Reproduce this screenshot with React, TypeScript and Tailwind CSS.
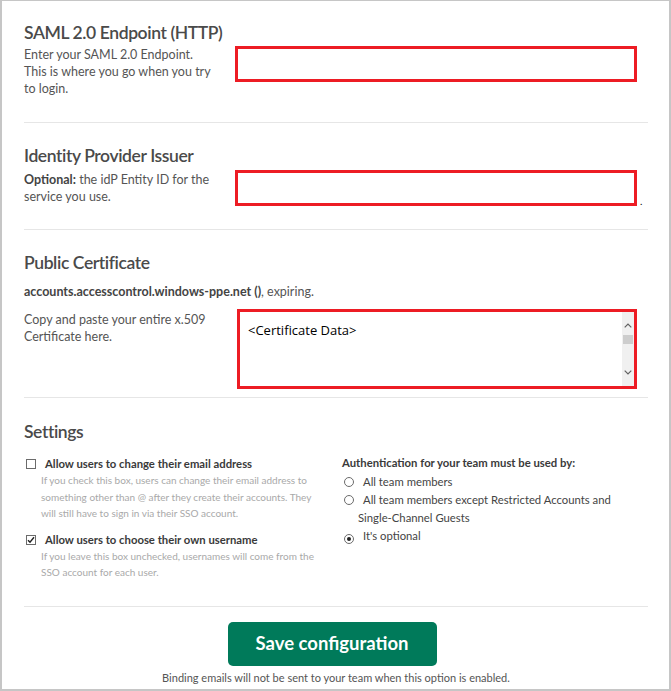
import React from 'react'

function Radio({ checked }: { checked?: boolean }) {
  return (
    <span className="inline-flex items-center justify-center w-[10px] h-[10px] rounded-full border border-[#6b6b6b] bg-white mr-[9px] align-[-1px] [text-indent:0]">
      {checked && <span className="w-[4px] h-[4px] rounded-full bg-[#222]" />}
    </span>
  )
}

function Checkbox({ checked }: { checked?: boolean }) {
  return (
    <span className="flex items-center justify-center w-[10px] h-[10px] ml-[2px] border border-[#6b6b6b] bg-white shrink-0">
      {checked && (
        <svg width="8" height="8" viewBox="0 0 8 8">
          <path d="M1 4.2 L3 6.3 L7 1.3" fill="none" stroke="#222" strokeWidth="1.4" />
        </svg>
      )}
    </span>
  )
}

function Chevron({ up }: { up?: boolean }) {
  return (
    <svg width="8" height="5" viewBox="0 0 8 5">
      <path d={up ? 'M0.7 4.3 L4 1 L7.3 4.3' : 'M0.7 0.7 L4 4 L7.3 0.7'} fill="none" stroke="#606060" strokeWidth="1.2" />
    </svg>
  )
}

export default function App() {
  return (
    <div className="w-[671px] h-[691px] bg-white border-[#c6c6c6] border-l-2 border-r-2 border-t border-b-2 [font-family:Lato,sans-serif] text-[#555]">
      <div className="pl-[22px] pr-[21px]">
        {/* SAML endpoint */}
        <section className="pt-[21px] pb-[25px] border-b border-[#e6e6e6]">
          <h2 className="text-[17.5px] leading-[22px] tracking-[-0.4px] font-semibold text-[#4a4a4a]">SAML 2.0 Endpoint (HTTP)</h2>
          <div className="flex mt-[2px]">
            <p className="w-[211px] text-[12.5px] leading-[17px]">
              Enter your SAML 2.0 Endpoint.<br />
              This is where you go when you try<br />
              to login.
            </p>
            <div className="w-[402px] h-[36px] border-[3px] border-[#ed1c24]" />
          </div>
        </section>

        {/* Issuer */}
        <section className="pt-[22px] pb-[23px] border-b border-[#e6e6e6]">
          <h2 className="text-[17.5px] leading-[22px] tracking-[-0.4px] font-semibold text-[#4a4a4a]">Identity Provider Issuer</h2>
          <div className="flex mt-[3px]">
            <p className="w-[211px] pt-[1px] text-[12.5px] leading-[17px]">
              <span className="font-bold text-[#444]">Optional:</span> the idP Entity ID for the<br />
              service you use.
            </p>
            <div className="w-[402px] h-[36px] border-[3px] border-[#ed1c24]" />
            <span className="self-end ml-[3px] text-[10px] leading-[10px] text-black">.</span>
          </div>
        </section>

        {/* Certificate */}
        <section className="pt-[22px] pb-[8px] border-b border-[#e6e6e6]">
          <h2 className="text-[17.5px] leading-[22px] tracking-[-0.4px] font-semibold text-[#4a4a4a]">Public Certificate</h2>
          <p className="mt-[9px] text-[12.5px] leading-[17px]">
            <span className="font-bold text-[#444]">accounts.accesscontrol.windows-ppe.net ()</span>, expiring.
          </p>
          <div className="flex mt-[9px]">
            <p className="w-[211px] pt-[2px] text-[12.5px] leading-[17px]">
              Copy and paste your entire x.509<br />
              Certificate here.
            </p>
            <div className="ml-[2px] w-[400px] h-[80px] border-[3px] border-[#ed1c24] flex">
              <div className="flex-1 pl-[8px] pt-[10px] text-[13px] leading-[16px] text-black [font-family:'Open_Sans',sans-serif]">
                &lt;Certificate Data&gt;
              </div>
              <div className="w-[12px] bg-[#f0f0f0] flex flex-col items-center pt-[11px]">
                <Chevron up />
                <div className="mt-[7px] w-[10px] h-[9px] bg-[#cdcdcd]" />
                <div className="flex-1" />
                <div className="mb-[11px]">
                  <Chevron />
                </div>
              </div>
            </div>
          </div>
        </section>

        {/* Settings */}
        <section className="pt-[23px] pb-[25px] border-b border-[#e6e6e6]">
          <h2 className="text-[17.5px] leading-[22px] tracking-[-0.4px] font-semibold text-[#4a4a4a]">Settings</h2>
          <div className="flex mt-[12px]">
            <div className="w-[318px] pt-[1px]">
              <div className="flex items-center gap-[9px]">
                <Checkbox />
                <span className="text-[11.3px] leading-[16px] font-bold text-[#3a3a3a]">Allow users to change their email address</span>
              </div>
              <p className="ml-[17px] text-[10px] leading-[16.5px] text-[#a9a9a9]">
                If you check this box, users can change their email address to<br />
                something other than @ after they create their accounts. They<br />
                will still have to sign in via their SSO account.
              </p>
              <div className="flex items-center gap-[9px] mt-[10px]">
                <Checkbox checked />
                <span className="text-[11.3px] leading-[16px] font-bold text-[#3a3a3a]">Allow users to choose their own username</span>
              </div>
              <p className="ml-[17px] text-[10px] leading-[16.5px] text-[#a9a9a9]">
                If you leave this box unchecked, usernames will come from the<br />
                SSO account for each user.
              </p>
            </div>
            <div>
              <p className="text-[11.3px] leading-[16px] font-bold text-[#3a3a3a]">Authentication for your team must be used by:</p>
              <div className="mt-[2px] text-[11.3px] leading-[18px] text-[#444]">
                <p className="pl-[16px] [text-indent:-14px]"><Radio />All team members</p>
                <p className="pl-[16px] [text-indent:-14px]">
                  <Radio />All team members except Restricted Accounts and<br />
                  Single-Channel Guests
                </p>
                <p className="pl-[16px] [text-indent:-14px]"><Radio checked />It's optional</p>
              </div>
            </div>
          </div>
        </section>

        {/* Footer */}
        <div className="flex flex-col items-center">
          <button className="mt-[15px] mr-[8px] w-[209px] h-[44px] rounded-[5px] bg-[#007a5a] text-white text-[18.5px] font-bold">
            Save configuration
          </button>
          <p className="mt-[5px] text-[11px] leading-[14px] text-[#555]">
            Binding emails will not be sent to your team when this option is enabled.
          </p>
        </div>
      </div>
    </div>
  )
}
